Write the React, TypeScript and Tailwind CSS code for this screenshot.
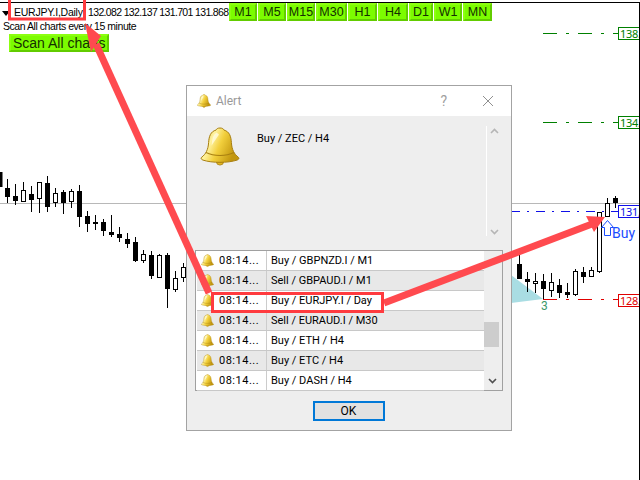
import React from "react";

type C = [number, number, number, number, number, number];
const candles: C[] = [
  [0, 172, 187, 172, 187, 1],
  [7.5, 179, 203, 188, 197, 1],
  [15.5, 184, 205, 196, 201, 1],
  [23.5, 182, 202, 190, 202, 0],
  [31.5, 186, 212, 194, 200, 1],
  [39.5, 182, 213, 182, 199, 0],
  [47.5, 176, 212, 183, 207, 1],
  [55.5, 188, 207, 193, 203, 0],
  [63.5, 190, 214, 192, 203, 1],
  [71.5, 189, 208, 191, 202, 0],
  [79.5, 185, 227, 191, 217, 1],
  [87.5, 211, 232, 216, 224, 1],
  [95.5, 215, 230, 222, 224, 0],
  [103.5, 219, 236, 222, 231, 1],
  [111.5, 215, 237, 232, 235, 1],
  [119.5, 227, 242, 234, 238, 1],
  [127.5, 233, 248, 239, 244, 1],
  [135.5, 237, 262, 242, 261, 1],
  [143.5, 250, 263, 254, 261, 0],
  [151.5, 251, 279, 255, 276, 1],
  [159.5, 254, 278, 255, 278, 0],
  [167.5, 253, 308, 255, 289, 1],
  [175.5, 271, 292, 278, 290, 0],
  [183.5, 263, 282, 267, 278, 0],
  [519.5, 253, 275, 264, 279, 1],
  [527.5, 272, 292, 279, 282, 1],
  [535.5, 273, 293, 281, 284, 0],
  [543.5, 274, 299, 281, 289, 1],
  [551.5, 273, 297, 282, 291, 0],
  [559.5, 279, 298, 285, 293, 1],
  [567.5, 283, 298, 292, 295, 1],
  [575.5, 269, 296, 271, 295, 0],
  [583.5, 267, 283, 272, 277, 1],
  [591.5, 267, 277, 270, 277, 0],
  [599.5, 212, 273, 212, 272, 0],
  [607.5, 198, 217, 203, 217, 0],
  [615.5, 196, 208, 198, 203, 1],
];

function Bell({ id, className }: { id: string; className: string }) {
  return (
    <svg viewBox="0 0 40 40" className={className}>
      <defs>
        <linearGradient id={id} x1="0" y1="0" x2="1" y2="0.4">
          <stop offset="0" stopColor="#c9a012" />
          <stop offset="0.35" stopColor="#fff3a0" />
          <stop offset="0.6" stopColor="#f2cf3c" />
          <stop offset="1" stopColor="#c2960e" />
        </linearGradient>
      </defs>
      <circle cx="20" cy="35" r="3.6" fill="#e0b420" stroke="#a87f10" strokeWidth="0.8" />
      <path
        d="M20 1.5 C17.5 1.5 16.5 2.5 16 3.6 C10.5 5 9 10 8.6 16 C8.2 23 6 27.5 1.4 31 C0.6 32 1.4 33 3 33.6 C12 36.6 28 36.6 37 33.6 C38.6 33 39.4 32 38.6 31 C34 27.5 31.8 23 31.4 16 C31 10 29.5 5 24 3.6 C23.5 2.5 22.5 1.5 20 1.5 Z"
        fill={`url(#${id})`}
        stroke="#a87f10"
        strokeWidth="1"
      />
      <path d="M6 26 C14 30 26 30 34 26" fill="none" stroke="#a87f10" strokeWidth="1.1" />
      <path d="M16.5 6 C13 8 12 13 11.6 19 L19 8 Z" fill="#fffbe0" opacity="0.8" />
    </svg>
  );
}

function Tf({ label, w }: { label: string; w: string }) {
  return (
    <div
      className={`${w} h-[18px] flex items-center justify-center whitespace-nowrap bg-[#7cfc00] border-2 border-t-[#8cff10] border-l-[#8cff10] border-b-[#62cc00] border-r-[#62cc00] text-[12.5px] leading-none text-[#143000]`}
    >
      {label}
    </div>
  );
}

const rows = [
  ["Buy / GBPNZD.I / M1", false],
  ["Sell / GBPAUD.I / M1", true],
  ["Buy / EURJPY.I / Day", false],
  ["Sell / EURAUD.I / M30", true],
  ["Buy / ETH / H4", false],
  ["Buy / ETC / H4", true],
  ["Buy / DASH / H4", false],
] as const;

function Chart() {
  return (
    <svg width="640" height="480" className="absolute left-0 top-0">
      <line x1="0" y1="203.5" x2="640" y2="203.5" stroke="#b8b8b8" />
      <polygon points="511,275 543,299 511,303" fill="#a9dde3" />
      <line x1="543" y1="33.5" x2="618" y2="33.5" stroke="#008000" strokeDasharray="14 9 3 9" />
      <line x1="543" y1="122.5" x2="618" y2="122.5" stroke="#008000" strokeDasharray="14 9 3 9" />
      <line x1="511" y1="211.5" x2="618" y2="211.5" stroke="#1010e8" strokeDasharray="9 7 2 7" />
      <line x1="543" y1="299.5" x2="618" y2="299.5" stroke="#e00000" strokeDasharray="14 9 3 9" />
      {candles.map(([x, wt, wb, bt, bb, f], i) => (
        <g key={i}>
          <line x1={x} y1={wt} x2={x} y2={wb} stroke="#000" />
          <rect
            x={x - 2}
            y={bt + 0.5}
            width={4}
            height={Math.max(bb - bt - 1, 1)}
            fill={f ? "#000" : "#fff"}
            stroke="#000"
          />
        </g>
      ))}
      <path d="M607.5 220.5 L613.5 227.5 L610.5 227.5 L610.5 235.5 L604.5 235.5 L604.5 227.5 L601.5 227.5 Z" fill="#fff" stroke="#1a4dff" />
    </svg>
  );
}

function PriceTag({ text, top, color }: { text: string; top: string; color: string }) {
  return (
    <div
      className={`absolute left-[618px] ${top} w-[30px] h-[13px] border bg-white text-[11px] leading-[11px] pl-px tracking-[-0.3px] ${color} font-['Noto_Sans',sans-serif]`}
    >
      {text}
    </div>
  );
}

function Overlay() {
  return (
    <svg width="640" height="480" className="absolute left-0 top-0 pointer-events-none">
      <line x1="96" y1="44" x2="209" y2="293" stroke="#ff4a4f" strokeWidth="7" />
      <polygon points="85,23 101,36 91,52" fill="#ff4a4f" />
      <line x1="384" y1="303" x2="592" y2="224" stroke="#ff4a4f" strokeWidth="7" />
      <polygon points="605,217 586,216 594,232" fill="#ff4a4f" />
      <g fill="none" stroke="#ff3b3f" strokeWidth="3">
        <rect x="9.5" y="-3" width="75" height="22" />
        <rect x="212.5" y="293.5" width="170" height="18" />
      </g>
    </svg>
  );
}

export default function App() {
  return (
    <div className="relative w-[640px] h-[480px] overflow-hidden bg-white font-['Roboto',sans-serif] text-black">
      <Chart />
      <PriceTag text="138." top="top-[27px]" color="border-[#008000] text-[#008000]" />
      <PriceTag text="134." top="top-[116px]" color="border-[#008000] text-[#008000]" />
      <PriceTag text="131," top="top-[205px]" color="border-[#1010e8] text-[#1010e8]" />
      <PriceTag text="128." top="top-[294px]" color="border-[#e00000] text-[#e00000]" />
      <div className="absolute left-[541px] top-[299px] text-[12px] leading-[14px] text-[#3a9a6a]">3</div>
      <div className="absolute left-[612px] top-[225px] text-[14px] leading-[16px] text-[#1a4dff]">Buy</div>

      <div className="relative flex flex-col font-['Liberation_Sans',sans-serif]">
        <div className="h-[3px] bg-white border-b border-black" />
        <div className="flex items-start h-[19px]">
          <div className="w-0 h-0 ml-[2px] mt-[8px] border-l-[4px] border-r-[4px] border-t-[5px] border-l-transparent border-r-transparent border-t-black" />
          <div className="ml-[4px] mt-[2px] w-[74px] text-[10.5px] leading-[15px] tracking-[-0.25px] whitespace-nowrap">EURJPY.I,Daily</div>
          <div className="w-[141px] mt-[2px] text-[10.5px] leading-[15px] tracking-[-0.65px] whitespace-nowrap">132.082 132.137 131.701 131.868</div>
          <div className="flex gap-px">
            <Tf label="M1" w="w-[28px]" />
            <Tf label="M5" w="w-[28px]" />
            <Tf label="M15" w="w-[28px]" />
            <Tf label="M30" w="w-[31px]" />
            <Tf label="H1" w="w-[29px]" />
            <Tf label="H4" w="w-[30px]" />
            <Tf label="D1" w="w-[24px]" />
            <Tf label="W1" w="w-[28px]" />
            <Tf label="MN" w="w-[29px]" />
          </div>
        </div>
        <div className="pl-[3px] h-[12px] text-[10.5px] leading-[9px] tracking-[-0.45px] whitespace-nowrap">Scan All charts every 15 minute</div>
        <div className="ml-[9px] w-[100px] h-[18px] flex items-center pl-[2px] whitespace-nowrap bg-[#7cfc00] border-2 border-t-[#8cff10] border-l-[#8cff10] border-b-[#62cc00] border-r-[#62cc00] text-[14px] leading-none text-[#143000]">
          Scan All charts
        </div>
      </div>
      <div className="absolute left-[639px] top-[3px] w-px h-[477px] bg-black" />

      <div className="absolute left-[186px] top-[85px] w-[326px] h-[346px] border border-[#a3a3a3] bg-[#eeeeee] flex flex-col">
        <div className="h-[30px] bg-white flex items-center pl-[10px] pr-[17px]">
          <Bell id="b0" className="w-[14px] h-[16px]" />
          <span className="ml-[5px] text-[12px] text-[#999999]">Alert</span>
          <span className="ml-auto text-[14px] text-[#a0a0a0]">?</span>
          <svg width="12" height="12" viewBox="0 0 12 12" className="ml-[35px]">
            <path d="M1 1 L11 11 M11 1 L1 11" stroke="#909090" fill="none" />
          </svg>
        </div>
        <div className="h-[134px] flex pl-[13px] pt-[10px]">
          <Bell id="b1" className="w-[40px] h-[41px]" />
          <div className="ml-[17px] mt-[5px] w-[229px] text-[11px] leading-[16px]">Buy / ZEC / H4</div>
          <div className="w-[15px] h-[110px] border-l border-white flex flex-col justify-between items-center pt-[2px] pb-[1px]">
            <svg width="9" height="6" viewBox="0 0 9 6"><path d="M1 5 L4.5 1.5 L8 5" stroke="#b5b5b5" strokeWidth="1.6" fill="none" /></svg>
            <svg width="9" height="6" viewBox="0 0 9 6"><path d="M1 1 L4.5 4.5 L8 1" stroke="#b5b5b5" strokeWidth="1.6" fill="none" /></svg>
          </div>
        </div>
        <div className="mx-[8px] h-[141px] border border-[#a0a0a0] bg-white flex">
          <div className="w-[288px] flex flex-col pl-px">
            {rows.map(([t, alt], i) => (
              <div
                key={i}
                className={`h-[20px] shrink-0 flex items-center border-b border-[#c8c8c8] text-[11px] ${alt ? "bg-[#e8e8e8]" : "bg-white"}`}
              >
                <div className="w-[70px] h-full flex items-center pl-[4px] border-r border-[#cccccc]">
                  <Bell id={`r${i}`} className="w-[13px] h-[15px]" />
                  <span className="ml-[5px] mt-px tracking-[0.5px]">08:14...</span>
                </div>
                <span className="ml-[4px] mt-px">{t}</span>
              </div>
            ))}
          </div>
          <div className="relative flex-1 bg-[#eeeeee]">
            <div className="absolute left-0 w-[15px] top-[71px] h-[25px] bg-[#cdcdcd]" />
            <svg width="9" height="6" viewBox="0 0 9 6" className="absolute left-[4px] top-[127px]">
              <path d="M1 1 L4.5 4.5 L8 1" stroke="#505050" strokeWidth="1.6" fill="none" />
            </svg>
          </div>
        </div>
        <div className="flex justify-center pt-[10px]">
          <div className="w-[72px] h-[20px] border-2 border-[#0078d7] bg-[#e1e1e1] flex items-center justify-center text-[12px] mr-px">OK</div>
        </div>
      </div>
      <Overlay />
    </div>
  );
}
